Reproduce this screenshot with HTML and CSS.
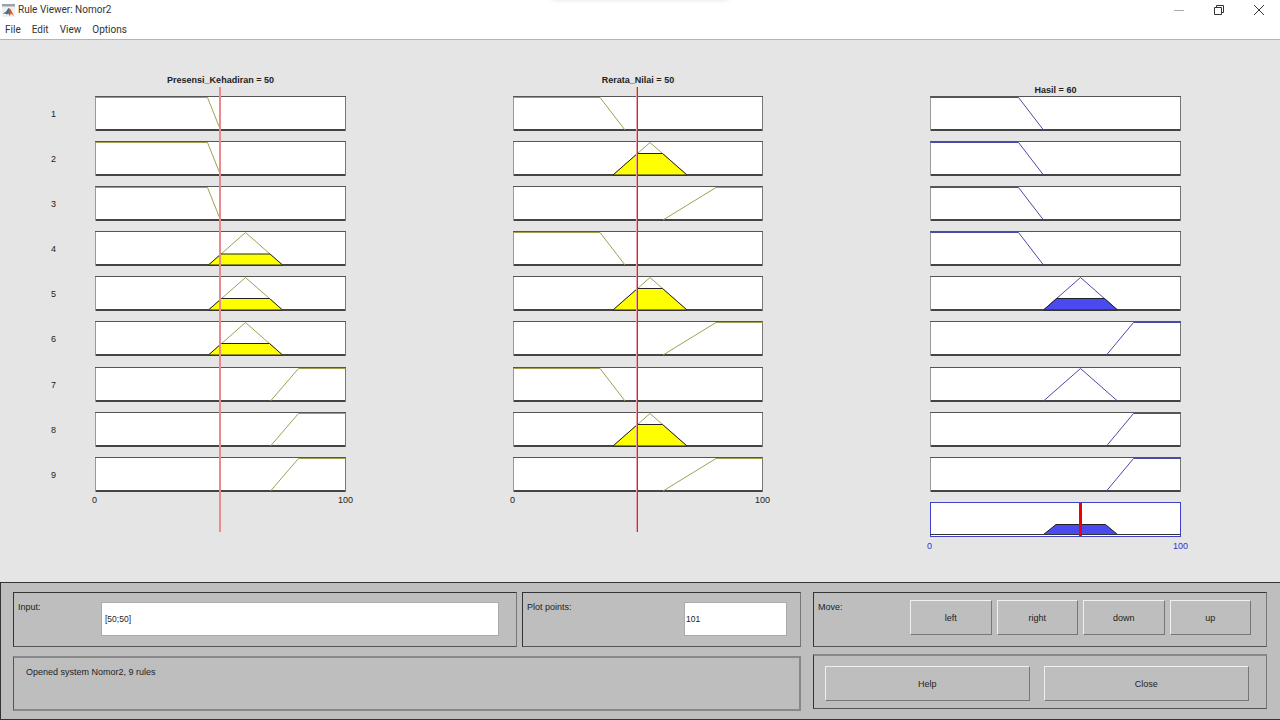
FILE: index.html
```html
<!DOCTYPE html>
<html lang="en">
<head>
    <meta charset="UTF-8">
    <title>Rule Viewer: Nomor2</title>
    <link rel="stylesheet" href="styles.css">
</head>
<body>
<header class="titlebar">
    <svg class="app-icon" viewBox="0 0 15 15">
        <path d="M1 1h13v13H1z" fill="#eef1f4"/>
        <path d="M1 1h13v2.500H1z" fill="#9aa2ab"/>
        <path d="M1.500 10.500l3.500-1.500 2.500-4 2 1 3.500 7-3-2.500-1.500 2.500-2-4-2 1z" fill="#d4581a"/>
        <path d="M1.500 10.500l3.500-1.500 2.500-4 0.500 5-2 1.500-2-1z" fill="#35719f"/>
    </svg>
    <span class="window-title">Rule Viewer: Nomor2</span>
    <div class="window-controls">
        <svg viewBox="0 0 12 12"><path d="M1 6.500h10" stroke="#aaa" fill="none"/></svg>
        <svg viewBox="0 0 12 12"><path d="M1.500 3.500h7v7h-7zM3.500 3.500v-2h7v7h-2" stroke="#333" fill="none"/></svg>
        <svg viewBox="0 0 12 12"><path d="M1 1l10 10M11 1L1 11" stroke="#333" fill="none"/></svg>
    </div>
    <div class="top-shadow"></div>
</header>
<nav class="menubar">
    <span>File</span>
    <span>Edit</span>
    <span>View</span>
    <span>Options</span>
</nav>

<main class="canvas">
    <div class="rule-numbers">
        <span>1</span><span>2</span><span>3</span><span>4</span><span>5</span><span>6</span><span>7</span><span>8</span><span>9</span>
    </div>

    <section class="column column-wide">
        <h2 class="var-title">Presensi_Kehadiran = 50</h2>
        <div class="plots">
            <svg class="plot" viewBox="0 0 250 35"><polyline class="mf olive" points="0,1.500 112,1.500 125,34"/></svg>
            <svg class="plot" viewBox="0 0 250 35"><polyline class="mf olive" points="0,1.500 112,1.500 125,34"/></svg>
            <svg class="plot" viewBox="0 0 250 35"><polyline class="mf olive" points="0,1.500 112,1.500 125,34"/></svg>
            <svg class="plot" viewBox="0 0 250 35"><polyline class="mf olive" points="113,34 150,1.500 187,34"/><polygon class="fill yellow" points="113,34 125.500,23 174.500,23 187,34"/></svg>
            <svg class="plot" viewBox="0 0 250 35"><polyline class="mf olive" points="113,34 150,1.500 187,34"/><polygon class="fill yellow" points="113,34 126,22.500 174,22.500 187,34"/></svg>
            <svg class="plot" viewBox="0 0 250 35"><polyline class="mf olive" points="113,34 150,1.500 187,34"/><polygon class="fill yellow" points="113,34 126,22.500 174,22.500 187,34"/></svg>
            <svg class="plot" viewBox="0 0 250 35"><polyline class="mf olive" points="175,34 203,1.500 250,1.500"/></svg>
            <svg class="plot" viewBox="0 0 250 35"><polyline class="mf olive" points="175,34 203,1.500 250,1.500"/></svg>
            <svg class="plot" viewBox="0 0 250 35"><polyline class="mf olive" points="175,34 203,1.500 250,1.500"/></svg>
        </div>
        <div class="axis"><span>0</span><span>100</span></div>
        <div class="cursor cursor-soft"></div>
    </section>

    <section class="column">
        <h2 class="var-title">Rerata_Nilai = 50</h2>
        <div class="plots">
            <svg class="plot" viewBox="0 0 250 35"><polyline class="mf olive" points="0,1.500 87,1.500 112,34"/></svg>
            <svg class="plot" viewBox="0 0 250 35"><polyline class="mf olive" points="100,34 137,1.500 174,34"/><polygon class="fill yellow" points="100,34 124.500,12.500 149.500,12.500 174,34"/></svg>
            <svg class="plot" viewBox="0 0 250 35"><polyline class="mf olive" points="150,34 203,1.500 250,1.500"/></svg>
            <svg class="plot" viewBox="0 0 250 35"><polyline class="mf olive" points="0,1.500 87,1.500 112,34"/></svg>
            <svg class="plot" viewBox="0 0 250 35"><polyline class="mf olive" points="100,34 137,1.500 174,34"/><polygon class="fill yellow" points="100,34 124.500,12.500 149.500,12.500 174,34"/></svg>
            <svg class="plot" viewBox="0 0 250 35"><polyline class="mf olive" points="150,34 203,1.500 250,1.500"/></svg>
            <svg class="plot" viewBox="0 0 250 35"><polyline class="mf olive" points="0,1.500 87,1.500 112,34"/></svg>
            <svg class="plot" viewBox="0 0 250 35"><polyline class="mf olive" points="100,34 137,1.500 174,34"/><polygon class="fill yellow" points="100,34 124.500,12.500 149.500,12.500 174,34"/></svg>
            <svg class="plot" viewBox="0 0 250 35"><polyline class="mf olive" points="150,34 203,1.500 250,1.500"/></svg>
        </div>
        <div class="axis"><span>0</span><span>100</span></div>
        <div class="cursor cursor-sharp"></div>
    </section>

    <section class="column column-wide">
        <h2 class="var-title output-title">Hasil = 60</h2>
        <div class="plots">
            <svg class="plot" viewBox="0 0 250 35"><polyline class="mf navy" points="0,1.500 88,1.500 113,34"/></svg>
            <svg class="plot" viewBox="0 0 250 35"><polyline class="mf navy" points="0,1.500 88,1.500 113,34"/></svg>
            <svg class="plot" viewBox="0 0 250 35"><polyline class="mf navy" points="0,1.500 88,1.500 113,34"/></svg>
            <svg class="plot" viewBox="0 0 250 35"><polyline class="mf navy" points="0,1.500 88,1.500 113,34"/></svg>
            <svg class="plot" viewBox="0 0 250 35"><polyline class="mf navy" points="113,34 150,1.500 187,34"/><polygon class="fill blue" points="113,34 126,22.500 174,22.500 187,34"/></svg>
            <svg class="plot" viewBox="0 0 250 35"><polyline class="mf navy" points="176,34 203,1.500 250,1.500"/></svg>
            <svg class="plot" viewBox="0 0 250 35"><polyline class="mf navy" points="113,34 150,1.500 187,34"/></svg>
            <svg class="plot" viewBox="0 0 250 35"><polyline class="mf navy" points="176,34 203,1.500 250,1.500"/></svg>
            <svg class="plot" viewBox="0 0 250 35"><polyline class="mf navy" points="176,34 203,1.500 250,1.500"/></svg>
        </div>
        <svg class="plot aggregate" viewBox="0 0 250 35">
            <polygon class="fill blue" points="113,32.500 125.500,22.500 175,22.500 187,32.500"/>
            <path class="baseline" d="M0 32.500H250"/>
            <path class="result" d="M150 1V34"/>
        </svg>
        <div class="axis axis-blue"><span>0</span><span>100</span></div>
    </section>
</main>

<footer class="controls">
    <div class="controls-left">
        <div class="controls-row">
            <div class="frame frame-input">
                <label>Input:</label>
                <div class="field field-input">[50;50]</div>
            </div>
            <div class="frame frame-points">
                <label>Plot points:</label>
                <div class="field field-points">101</div>
            </div>
        </div>
        <div class="frame frame-status">Opened system Nomor2, 9 rules</div>
    </div>
    <div class="controls-right">
        <div class="frame frame-move">
            <label>Move:</label>
            <div class="move-buttons">
                <button>left</button>
                <button>right</button>
                <button>down</button>
                <button>up</button>
            </div>
        </div>
        <div class="frame frame-actions">
            <button>Help</button>
            <button>Close</button>
        </div>
    </div>
</footer>
</body>
</html>
```

FILE: styles.css
```css
* {
    box-sizing: border-box;
    margin: 0;
    padding: 0;
}

html, body {
    width: 1280px;
    height: 720px;
    overflow: hidden;
}

body {
    display: flex;
    flex-direction: column;
    background: #e5e5e5;
    color: #222;
    font-family: "Liberation Sans", Arial, sans-serif;
    font-size: 9px;
}

/* window chrome */
.titlebar {
    position: relative;
    display: flex;
    align-items: center;
    height: 19px;
    background: #fff;
    padding-left: 1px;
    font-family: Roboto, sans-serif;
    color: #333;
    overflow: hidden;
}

.app-icon {
    width: 15px;
    height: 15px;
    margin: 2px 2px 0 0;
}

.window-title {
    font-size: 10px;
}

.window-controls {
    display: flex;
    gap: 28px;
    margin-left: auto;
    padding-right: 15px;
}

.window-controls svg {
    width: 12px;
    height: 12px;
}

.top-shadow {
    position: absolute;
    left: 552px;
    top: -4px;
    width: 176px;
    height: 4px;
    box-shadow: 0 0 5px rgba(0, 0, 0, 0.12);
}

.menubar {
    display: flex;
    gap: 11px;
    height: 21px;
    padding: 5px 0 0 5px;
    background: #fff;
    border-bottom: 1px solid #b4b4b4;
    font-family: Roboto, sans-serif;
    font-size: 10px;
    color: #333;
}

/* plot area */
.canvas {
    position: relative;
    display: flex;
    height: 542px;
    padding-left: 95px;
    gap: 167px;
}

.rule-numbers {
    position: absolute;
    left: 51px;
    top: 56.5px;
    display: grid;
    grid-template-rows: repeat(9, 35px);
    row-gap: 10.1px;
    align-items: center;
}

.column {
    position: relative;
    width: 250px;
}

.column-wide {
    width: 251px;
}

.var-title {
    height: 56px;
    padding-top: 35px;
    text-align: center;
    font-size: 9px;
    font-weight: bold;
    line-height: 11px;
}

.output-title {
    padding-top: 45px;
}

.plots {
    display: grid;
    grid-template-rows: repeat(9, 35px);
    row-gap: 10.1px;
}

.plot {
    display: block;
    width: 100%;
    height: 35px;
    background: #fff;
    box-shadow: inset 0 1px #555, inset 1px 0 #999, inset -1px 0 #777, inset 0 -2px #444;
}

.mf {
    fill: none;
    stroke-width: 1;
}

.olive {
    stroke: #a0a050;
}

.navy {
    stroke: #4a4aa8;
}

.fill {
    stroke: #222;
    stroke-width: 1;
}

.yellow {
    fill: #ffff00;
}

.blue {
    fill: #4a4af0;
}

.axis {
    display: flex;
    justify-content: space-between;
    margin: 3px -7px 0 -3px;
    line-height: 11px;
}

.axis-blue {
    color: #3232c8;
    margin: 4px -7px 0 -3px;
}

.aggregate {
    margin-top: 10px;
    box-shadow: inset 0 0 0 1px #4040c8;
}

.baseline {
    stroke: #333;
    fill: none;
}

.result {
    stroke: #f00000;
    stroke-width: 3;
}

.cursor {
    position: absolute;
    top: 47px;
    height: 445px;
}

.cursor-soft {
    left: 124px;
    width: 2px;
    background: #ea8a8c;
}

/* two pixels so the red survives the picture's colour blocks */
.cursor-sharp {
    left: 123px;
    width: 2px;
    background: #e4202c;
    border-left: 1px solid #f0a0a4;
}

/* bottom control panel */
.controls {
    display: flex;
    gap: 12px;
    flex: 1;
    padding: 9px 12px 8px 12px;
    background: #bebebe;
    border-top: 1px solid #333;
    border-left: 1px solid #333;
    border-bottom: 1px solid #333;
}

.controls-left {
    display: flex;
    flex-direction: column;
    gap: 9px;
    width: 788px;
}

.controls-row {
    display: flex;
    gap: 5px;
    height: 55px;
}

.controls-right {
    display: flex;
    flex-direction: column;
    gap: 7px;
    width: 454px;
}

.frame {
    border: 1px solid #333;
    border-right-color: #777;
    border-bottom-color: #555;
}

.frame label {
    display: block;
}

.frame-input {
    display: flex;
    justify-content: space-between;
    width: 504px;
    padding: 9px 17px 9px 4px;
}

.frame-points {
    display: flex;
    justify-content: space-between;
    flex: 1;
    padding: 9px 13px 9px 4px;
}

.field {
    height: 34px;
    padding-left: 3px;
    background: #fff;
    border: 1px solid #aaa;
    font-size: 8.5px;
    line-height: 33px;
}

.field-input {
    width: 398px;
}

.field-points {
    width: 103px;
    padding-left: 1px;
}

.frame-status {
    flex: 1;
    padding: 9px 12px;
    border-top: 2px solid #888;
    border-right: 2px solid #888;
    border-bottom: 2px solid #888;
    border-left-color: #555;
}

.frame-move {
    display: flex;
    justify-content: space-between;
    height: 55px;
    padding: 7px 15px 0 4px;
}

.frame-move label {
    padding-top: 2px;
}

.move-buttons {
    display: flex;
    gap: 5px;
}

.move-buttons button {
    width: 81.5px;
}

button {
    height: 35px;
    background: #bebebe;
    border: 1px solid;
    border-color: #f0f0f0 #777 #777 #f0f0f0;
    color: #222;
    font-family: "Liberation Sans", Arial, sans-serif;
    font-size: 9px;
}

.frame-actions {
    display: flex;
    gap: 14.5px;
    height: 55px;
    padding: 10px 0 0 11px;
    border-top: 2px solid #888;
}

.frame-actions button {
    width: 204.5px;
}
```
